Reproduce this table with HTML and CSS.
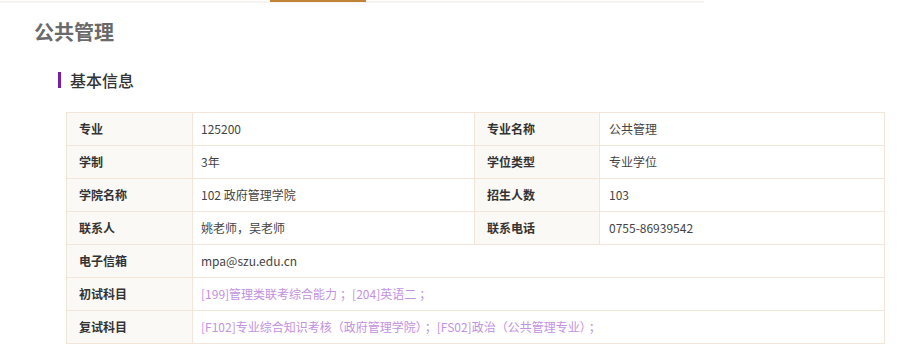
FILE: index.html
```html
<!DOCTYPE html>
<html lang="zh-CN">
<head>
<meta charset="utf-8">
<title>公共管理</title>
<link rel="stylesheet" href="styles.css">
</head>
<body>
<div class="tabbar"><div class="tab-active"></div></div>
<main class="content">
  <h1 class="title">公共管理</h1>
  <h2 class="section"><span class="section-mark"></span>基本信息</h2>
  <table class="info">
    <colgroup>
      <col class="c-label"><col class="c-value"><col class="c-label2"><col class="c-value2">
    </colgroup>
    <tbody>
      <tr><th>专业</th><td>125200</td><th>专业名称</th><td class="v2">公共管理</td></tr>
      <tr><th>学制</th><td>3年</td><th>学位类型</th><td class="v2">专业学位</td></tr>
      <tr><th>学院名称</th><td>102 政府管理学院</td><th>招生人数</th><td class="v2">103</td></tr>
      <tr><th>联系人</th><td>姚老师，吴老师</td><th>联系电话</th><td class="v2">0755-86939542</td></tr>
      <tr><th>电子信箱</th><td colspan="3">mpa@szu.edu.cn</td></tr>
      <tr><th>初试科目</th><td colspan="3" class="subj">[199]管理类联考综合能力<span class="punct">；</span>[204]英语二<span class="punct">；</span></td></tr>
      <tr><th>复试科目</th><td colspan="3" class="subj">[F102]专业综合知识考核（政府管理学院）<span class="punct">；</span>[FS02]政治（公共管理专业）<span class="punct">；</span></td></tr>
    </tbody>
  </table>
</main>
</body>
</html>
```

FILE: styles.css
```css
html, body {
  margin: 0;
  padding: 0;
  background: #fff;
  font-family: "Noto Sans CJK SC", "Noto Sans", sans-serif;
  color: #333;
}

.tabbar {
  width: 704px;
  height: 3px;
  background: linear-gradient(to bottom, transparent 1px, #f8f3ee 1px);
}

.tab-active {
  margin-left: 270px;
  width: 96px;
  height: 2px;
  background: #c08337;
}

.content {
  padding-left: 34px;
}

.title {
  margin: 15px 0 0 0;
  font-size: 20px;
  line-height: 28px;
  font-weight: 700;
  color: #6a6a6a;
}

.section {
  display: flex;
  align-items: center;
  gap: 9px;
  margin: 26px 0 24px 24px;
  height: 16px;
  font-size: 16px;
  line-height: 16px;
  font-weight: 500;
  color: #333;
}

.section-mark {
  width: 3px;
  height: 16px;
  background: #7b1fa2;
}

.info {
  margin-left: 32px;
  width: 818px;
  table-layout: fixed;
  border-collapse: collapse;
  font-size: 12px;
}

.c-label { width: 126px; }
.c-value { width: 282px; }
.c-label2 { width: 125px; }
.c-value2 { width: 285px; }

.info th,
.info td {
  height: 32px;
  padding: 0 0 0 8px;
  border: 1px solid #f3e5d8;
  line-height: 16px;
  text-align: left;
  vertical-align: middle;
  color: #444;
  font-weight: 400;
}

.info th {
  padding-left: 12px;
  background: #fbf9f5;
  color: #333;
  font-weight: 700;
}

.info td.v2 {
  padding-left: 9px;
}

.info td.subj {
  color: #c391e2;
}

.punct {
  padding-left: 3px;
}
```
